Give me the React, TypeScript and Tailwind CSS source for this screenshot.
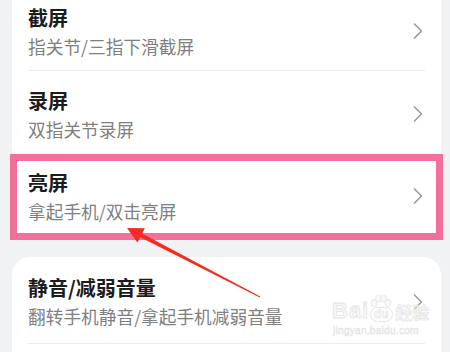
import React from "react";

const Chevron = () => (
  <svg width="10" height="16" viewBox="0 0 10 16" className="shrink-0 mt-[3px]">
    <path d="M1.5 1 L8.5 8 L1.5 15" fill="none" stroke="#9a9a9a" strokeWidth="1.6" strokeLinecap="round" strokeLinejoin="round" />
  </svg>
);

const Row = ({ title, sub, h = "h-[82px]", pt = "pt-[17px]" }: { title: string; sub: string; h?: string; pt?: string }) => (
  <div className={`flex items-center justify-between pl-4 pr-[18px] ${h}`}>
    <div className={`flex flex-col gap-1 self-start ${pt}`}>
      <div className="text-[20px] leading-[26px] font-bold text-[#1c1c1c]">{title}</div>
      <div className="text-[17.7px] leading-[22px] text-[#7f7f7f]">{sub}</div>
    </div>
    <Chevron />
  </div>
);

const Divider = () => <div className="ml-4 mr-4 h-px bg-[#ececec]" />;

export default function App() {
  return (
    <div
      className="relative w-[450px] h-[352px] overflow-hidden bg-[#f1f2f4]"
      style={{ fontFamily: '"Noto Sans CJK SC", "Noto Sans", sans-serif' }}
    >
      <div className="flex flex-col gap-[22px] -mt-[12px] ml-[12px] w-[429px]">
        <div className="bg-white rounded-b-[6px] flex flex-col">
          <Row title="截屏" sub="指关节/三指下滑截屏" />
          <Divider />
          <Row title="录屏" sub="双指关节录屏" />
          <Row title="亮屏" sub="拿起手机/双击亮屏" />
        </div>
        <div className="bg-white rounded-t-[18px] flex flex-col h-[120px]">
          <Row title="静音/减弱音量" sub="翻转手机静音/拿起手机减弱音量" h="h-[86px]" pt="pt-[18px]" />
          <Divider />
        </div>
      </div>

      {/* annotation box */}
      <div className="absolute left-[10px] top-[154px] w-[433px] h-[86px] border-[7px] border-[#f4709a] pointer-events-none" />

      {/* watermark */}
      <div className="absolute left-[332px] top-[294px] flex flex-col items-start pointer-events-none select-none opacity-80">
        <div className="flex items-end">
          <span
            className="text-[22px] leading-[22px] font-bold text-[#f7f7f7] tracking-[1px]"
            style={{ fontFamily: '"Liberation Sans", sans-serif', WebkitTextStroke: "0.8px #dedede" }}
          >
            Bai
          </span>
          <span className="flex flex-col items-center -ml-[1px]">
            <svg width="26" height="16" viewBox="0 0 26 16">
              <g fill="#f7f7f7" stroke="#dedede" strokeWidth="0.8">
                <ellipse cx="6" cy="9" rx="3" ry="3.6" />
                <ellipse cx="10.5" cy="4.5" rx="3" ry="3.6" />
                <ellipse cx="15.5" cy="4.5" rx="3" ry="3.6" />
                <ellipse cx="20" cy="9" rx="3" ry="3.6" />
              </g>
            </svg>
            <span
              className="text-[12px] leading-[13px] font-bold text-[#f7f7f7] border border-[#dedede] rounded-[8px] px-[3px] -mt-[3px]"
              style={{ fontFamily: '"Liberation Sans", sans-serif', WebkitTextStroke: "0.6px #dedede" }}
            >
              du
            </span>
          </span>
          <span
            className="text-[17px] leading-[20px] font-bold text-[#f7f7f7] ml-[1px]"
            style={{ WebkitTextStroke: "0.7px #dedede" }}
          >
            经验
          </span>
        </div>
        <div
          className="text-[10px] leading-[12px] mt-[3px] ml-[1px] text-[#f7f7f7] tracking-[0.3px]"
          style={{ fontFamily: '"Liberation Sans", sans-serif', WebkitTextStroke: "0.5px #dadada" }}
        >
          jingyan.baidu.com
        </div>
      </div>

      {/* red arrow */}
      <svg className="absolute left-0 top-0 pointer-events-none" width="450" height="352" viewBox="0 0 450 352">
        <polygon
          points="127,228 144.9,228.3 142.1,233.6 260.2,296.6 259.8,297.4 140.3,237.2 137.5,242.5"
          fill="#f42b21"
        />
      </svg>
    </div>
  );
}
